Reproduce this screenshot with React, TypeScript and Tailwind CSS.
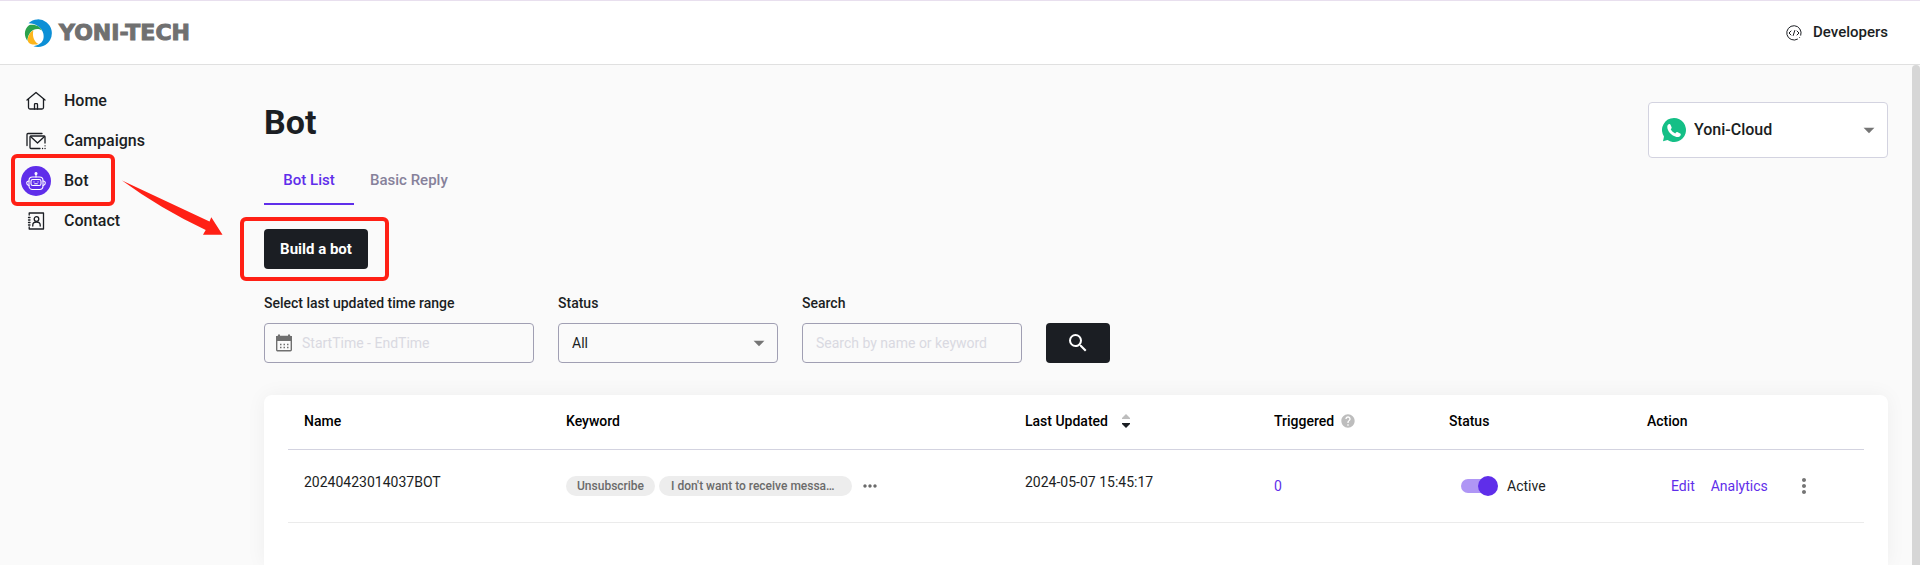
import React from 'react';
import { MdArrowDropDown, MdHelp, MdMoreHoriz, MdMoreVert, MdSearch } from 'react-icons/md';

interface NavItem {
  label: string;
  icon: React.ReactNode;
  active?: boolean;
}

interface Bot {
  id: string;
  name: string;
  keywords: string[];
  updatedAt: string;
  triggered: number;
  active: boolean;
}

const bots: Bot[] = [
  {
    id: '1',
    name: '20240423014037BOT',
    keywords: ['Unsubscribe', "I don't want to receive messages"],
    updatedAt: '2024-05-07 15:45:17',
    triggered: 0,
    active: true,
  },
];

const LogoMark = () => (
  <svg width="28" height="28" viewBox="0 0 28 28" aria-hidden="true">
    <path d="M4.5 4.2A13.8 13.8 0 1 1 9.5 27.2C19 25.5 20.5 20 19.3 14.5C18 9 12 4.2 4.5 4.2Z" fill="#0c8fd6" />
    <path d="M5 6.2C10 4.6 16.5 7 17.8 11.5C14 8.8 9.5 10 6.8 13C4.5 15.5 3.5 18.5 3.4 22C-.5 16.5 .2 10 5 6.2Z" fill="#2ba24c" />
    <path d="M9.5 11.2C8 16 9.5 22.5 14.5 25C10.5 26.3 6 25.5 4.2 23C3 18.5 5.5 13.2 9.5 11.2Z" fill="#fdb51b" />
  </svg>
);

const HomeIcon = () => (
  <svg width="20" height="20" viewBox="0 0 20 20" fill="none" stroke="#1b1e23" strokeWidth="1.3" strokeLinecap="round" strokeLinejoin="round" aria-hidden="true">
    <path d="M1 9L10 1.5L19 9" />
    <path d="M2.5 8V16.5Q2.5 18 4 18H16Q17.5 18 17.5 16.5V8" />
    <path d="M8.5 18V13.5Q8.5 12.7 9.2 12.7H10.8Q11.5 12.7 11.5 13.5V18" />
  </svg>
);

const CampaignIcon = () => (
  <svg width="20" height="20" viewBox="0 0 20 20" fill="none" stroke="#1b1e23" strokeWidth="1.3" strokeLinecap="round" strokeLinejoin="round" aria-hidden="true">
    <path d="M1 14.5V3.5Q1 2.5 2 2.5H16" />
    <path d="M14 17.5H5Q4 17.5 4 16.5V6Q4 5 5 5H18Q19 5 19 6V12" />
    <path d="M4.5 5.5L11.5 12L18.5 5.5" />
    <path d="M16.5 17.5H16.6M19 17.5H19.1M19 14.8H19.1" />
  </svg>
);

const BotIcon = () => (
  <span className="flex size-[30px] items-center justify-center rounded-full bg-[#5f2eea]">
    <svg width="20" height="20" viewBox="0 0 20 20" fill="none" stroke="#fff" strokeWidth="1.1" strokeLinecap="round" aria-hidden="true">
      <circle cx="10" cy="2.5" r="1" fill="#fff" />
      <path d="M10 3.5V6" />
      <rect x="3" y="6" width="14" height="12.5" rx="3.5" />
      <rect x="5" y="8.5" width="10" height="6" rx="1.8" />
      <path d="M3 10Q.7 10 .7 12T3 14.5M17 10Q19.3 10 19.3 12T17 14.5" />
      <path d="M8 10.7V11M12 10.7V11M8.7 12.7H11.3" />
    </svg>
  </span>
);

const ContactIcon = () => (
  <svg width="20" height="20" viewBox="0 0 20 20" fill="none" stroke="#1b1e23" strokeWidth="1.3" strokeLinecap="round" strokeLinejoin="round" aria-hidden="true">
    <path d="M3.2 4V2H17.5V18H3.2V16" />
    <path d="M2.5 6.5H4M2.5 9H4M2.5 11.5H4M2.5 14H4" />
    <circle cx="10.5" cy="8" r="2.3" />
    <path d="M6.8 15V14Q6.8 11 10.5 11T14.2 14V15" />
  </svg>
);

const DeveloperIcon = () => (
  <svg width="16" height="16" viewBox="0 0 16 16" fill="none" stroke="#1b1e23" strokeWidth="1" strokeLinecap="round" strokeLinejoin="round" aria-hidden="true">
    <path d="M11.5 14.2A7.2 7.2 0 1 1 14.8 10.2M13.6 12.5L13.7 12.4" />
    <path d="M5 6L3 8L5 10M11 6L13 8L11 10M8.8 5.5L7.2 10.5" />
  </svg>
);

const PhoneBadge = () => (
  <svg width="24" height="24" viewBox="0 0 24 24" aria-hidden="true">
    <path d="M12 0A12 12 0 1 1 5.5 22.1L1 23.2L2 18.5A12 12 0 0 1 12 0Z" fill="#14bf86" />
    <path d="M5.3 8.6C5.4 7.2 6.5 6.2 7.3 6.1C8 6 8.3 6.2 8.6 6.9L9.6 9.2C9.8 9.8 9.5 10.3 8.7 11.3C9.7 13.2 11.2 14.5 13.2 15.4C14.2 14.3 14.6 13.7 15.3 14L18.2 15.5C19 15.9 18.9 16.5 18.5 17.4C17.8 18.7 16 19.3 14.5 19C9.5 18 5 13 5.3 8.6Z" fill="#fff" />
  </svg>
);

const CalendarIcon = () => (
  <svg width="18" height="18" viewBox="0 0 18 18" aria-hidden="true">
    <path d="M4 .5V3M14 .5V3" stroke="#707070" strokeWidth="2" />
    <rect x="1.7" y="2.5" width="14.6" height="14.3" rx="1" fill="none" stroke="#707070" strokeWidth="1.4" />
    <path d="M1 2H17V7H1Z" fill="#707070" />
    <path d="M5 10.5H13.5M5 13.5H13.5" stroke="#707070" strokeWidth="1.5" strokeDasharray="1.5 2" />
  </svg>
);

const SortIcon = () => (
  <svg width="8" height="14" viewBox="0 0 8 14" aria-hidden="true">
    <path d="M4 0L8 4V5H0V4Z" fill="#bdbdbd" />
    <path d="M4 14L0 10V9H8V10Z" fill="#1b1e23" />
  </svg>
);

const navItems: NavItem[] = [
  { label: 'Home', icon: <HomeIcon /> },
  { label: 'Campaigns', icon: <CampaignIcon /> },
  { label: 'Bot', icon: <BotIcon />, active: true },
  { label: 'Contact', icon: <ContactIcon /> },
];

const Header = () => (
  <header className="flex h-[65px] shrink-0 items-center justify-between border-y border-t-[#e8dfee] border-b-[#e0e0e0] bg-white pr-8 pl-6">
    <a href="#" className="flex items-center gap-[7px]">
      <LogoMark />
      <span className="font-['DejaVu_Sans'] text-[22px] leading-6 font-bold text-[#707070] [-webkit-text-stroke:1px_#707070]">
        YONI-TECH
      </span>
    </a>
    <a href="#developers" className="flex items-center gap-[11px] text-[15px] font-medium">
      <DeveloperIcon />
      Developers
    </a>
  </header>
);

const Sidebar = () => (
  <nav className="relative w-60 shrink-0 pt-4">
    {navItems.map((item) => (
      <a
        key={item.label}
        href={`#${item.label.toLowerCase()}`}
        className="relative flex h-10 items-center gap-[13px] pl-[21px] text-base font-medium"
      >
        <span className="flex w-[30px] justify-center">{item.icon}</span>
        {item.label}
        {item.active && (
          <span className="absolute -top-[7px] left-[11px] h-[52px] w-[104px] rounded-md border-4 border-[#ff2015]" />
        )}
      </a>
    ))}
    {/* Guide arrow from the menu entry to the button */}
    <svg className="absolute top-[115px] left-[121px]" width="102" height="56" viewBox="0 0 102 56" aria-hidden="true">
      <path d="M1 .5L88.5 41.5L90.3 37.3L101.5 54.7H82L84.7 50Q40 29 1 .5Z" fill="#ff2015" />
    </svg>
  </nav>
);

const Filters = () => (
  <form className="mt-6 flex items-end gap-6 text-sm" onSubmit={(e) => e.preventDefault()}>
    <div className="flex w-[270px] flex-col gap-[10px]">
      <label htmlFor="range" className="font-medium">Select last updated time range</label>
      <div className="flex h-10 items-center gap-[9px] rounded border border-[#a09fb3] px-[10px]">
        <CalendarIcon />
        <input id="range" placeholder="StartTime - EndTime" className="min-w-0 flex-1 outline-none placeholder:text-[#d9d9e1]" />
      </div>
    </div>
    <div className="flex w-[220px] flex-col gap-[10px]">
      <label htmlFor="status" className="font-medium">Status</label>
      <div className="relative">
        <select id="status" className="h-10 w-full appearance-none rounded border border-[#a09fb3] px-[13px]">
          <option>All</option>
        </select>
        <MdArrowDropDown size={26} className="pointer-events-none absolute top-[7px] right-[6px] text-[#757575]" />
      </div>
    </div>
    <div className="flex w-[220px] flex-col gap-[10px]">
      <label htmlFor="search" className="font-medium">Search</label>
      <input
        id="search"
        placeholder="Search by name or keyword"
        className="h-10 rounded border border-[#a09fb3] px-[13px] outline-none placeholder:text-[#d9d9e1]"
      />
    </div>
    <button type="submit" aria-label="Search" className="flex h-10 w-16 items-center justify-center rounded bg-[#1b1e23] text-white">
      <MdSearch size={24} />
    </button>
  </form>
);

const BotTable: React.FC<{ bots: Bot[] }> = ({ bots }) => (
  <table className="w-full table-fixed border-collapse text-left text-sm">
    <colgroup>
      <col className="w-[262px]" />
      <col className="w-[459px]" />
      <col className="w-[249px]" />
      <col className="w-[175px]" />
      <col className="w-[198px]" />
      <col className="w-[233px]" />
    </colgroup>
    <thead>
      <tr className="h-[54px] border-b border-[#d3d3e0] text-black [&>th]:px-4 [&>th]:pb-[2px] [&>th]:font-medium">
        <th>Name</th>
        <th>Keyword</th>
        <th>
          <span className="flex items-center gap-[14px]">
            Last Updated
            <SortIcon />
          </span>
        </th>
        <th>
          <span className="flex items-center gap-[6px]">
            Triggered
            <MdHelp size={16} className="text-[#bdbdbd]" />
          </span>
        </th>
        <th>Status</th>
        <th>Action</th>
      </tr>
    </thead>
    <tbody>
      {bots.map((bot) => (
        <tr key={bot.id} className="h-[73px] border-b border-[#ebebeb] [&>td]:px-4">
          <td className="pb-2">{bot.name}</td>
          <td>
            <div className="flex items-center gap-1 text-xs font-medium text-[#6b6b6b]">
              {bot.keywords.map((keyword) => (
                <span key={keyword} className="h-5 max-w-[193px] truncate rounded-full bg-[#ededed] px-[11px] leading-5 last-of-type:px-3">
                  {keyword}
                </span>
              ))}
              <button aria-label="More keywords" className="ml-1">
                <MdMoreHoriz size={20} />
              </button>
            </div>
          </td>
          <td className="pb-2">{bot.updatedAt}</td>
          <td className="text-[#5f2eea]">{bot.triggered}</td>
          <td>
            <label className="flex items-center gap-[9px] pl-3">
              <span className="relative flex h-5 w-[37px] items-center">
                <input type="checkbox" defaultChecked={bot.active} className="peer absolute inset-0 opacity-0" />
                <span className="h-[14px] w-[34px] rounded-full bg-gray-300 peer-checked:bg-[#af96f5]" />
                <span className="absolute left-0 size-5 rounded-full bg-gray-500 peer-checked:left-[17px] peer-checked:bg-[#5f2eea]" />
              </span>
              Active
            </label>
          </td>
          <td>
            <div className="flex items-center gap-4 pl-6 text-[#5f2eea]">
              <a href="#edit">Edit</a>
              <a href="#analytics">Analytics</a>
              <button aria-label="More actions" className="ml-2 text-[#757575]">
                <MdMoreVert size={24} />
              </button>
            </div>
          </td>
        </tr>
      ))}
    </tbody>
  </table>
);

export default function App() {
  return (
    <div className="flex h-screen flex-col overflow-hidden bg-[#fafafa] font-[Roboto,sans-serif] text-[#1b1e23]">
      <Header />
      <div className="flex min-h-0 flex-1">
        <Sidebar />
        <main className="flex min-w-0 flex-1 flex-col pt-[37px] pr-6 pl-6">
          <div className="flex items-start justify-between">
            <h1 className="text-[34px] leading-10 font-bold">Bot</h1>
            <div className="relative w-60">
              <span className="pointer-events-none absolute top-4 left-[14px]">
                <PhoneBadge />
              </span>
              <select
                aria-label="Account"
                className="h-14 w-full appearance-none rounded border border-[#d3d3e0] bg-white pl-[45px] text-base font-medium"
              >
                <option>Yoni-Cloud</option>
              </select>
              <MdArrowDropDown size={26} className="pointer-events-none absolute top-[15px] right-[6px] text-[#757575]" />
            </div>
          </div>
          <div role="tablist" className="flex h-[47px] text-[15px] font-medium">
            <button role="tab" aria-selected="true" className="min-w-[90px] border-b-2 border-[#5f2eea] text-[#5f2eea]">
              Bot List
            </button>
            <button role="tab" aria-selected="false" className="border-b-2 border-transparent px-4 text-[#86819a]">
              Basic Reply
            </button>
          </div>
          <div className="relative mt-6 flex">
            <button className="h-10 w-[104px] rounded bg-[#1b1e23] text-[15px] font-bold text-white">Build a bot</button>
            <span className="pointer-events-none absolute -top-3 -left-6 h-16 w-[149px] rounded-md border-4 border-[#ff2015]" />
          </div>
          <Filters />
          <section className="mt-8 flex-1 rounded-t-lg bg-white px-6 shadow-[0_0_20px_rgba(0,0,0,0.05)]">
            <BotTable bots={bots} />
          </section>
        </main>
        <div className="w-2 shrink-0 rounded-t-full bg-[#d6d6d6]" />
      </div>
    </div>
  );
}
